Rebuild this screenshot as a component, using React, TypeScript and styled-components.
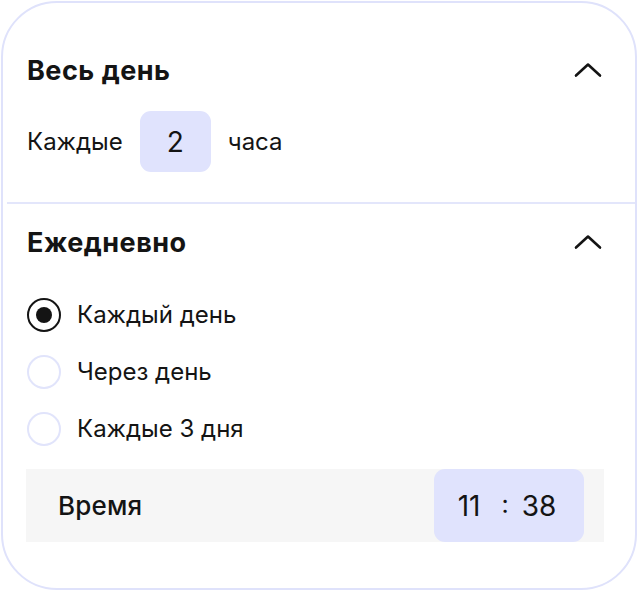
import React from "react";
import styled, { createGlobalStyle } from "styled-components";

const Global = createGlobalStyle`
  html, body { margin: 0; padding: 0; background: #ffffff; }
  body { font-family: Inter, "Noto Sans", sans-serif; color: #141414; }
`;

const Page = styled.div`
  width: 640px;
  height: 593px;
  padding: 1px 3px 3px 1px;
  box-sizing: border-box;
`;

const Card = styled.div`
  width: 636px;
  height: 589px;
  box-sizing: border-box;
  border: 2px solid #dfe2fb;
  border-radius: 56px;
  background: #ffffff;
  overflow: hidden;
  display: flex;
  flex-direction: column;
`;

const Section = styled.section<{ $top: number; $bottom: number }>`
  padding: ${(p) => p.$top}px 31px ${(p) => p.$bottom}px 24px;
  display: flex;
  flex-direction: column;
`;

const Header = styled.div`
  height: 40px;
  display: flex;
  align-items: center;
  justify-content: space-between;
`;

const Title = styled.h2`
  margin: 0;
  font-size: 27px;
  font-weight: 700;
  letter-spacing: 0.5px;
  color: #141414;
`;

const Chevron = styled.svg`
  width: 28px;
  height: 16px;
  margin-right: 2px;
`;

const EveryRow = styled.div`
  margin-top: 21px;
  display: flex;
  align-items: center;
  font-size: 24px;
`;

const NumberBox = styled.div`
  width: 71px;
  height: 61px;
  margin: 0 17px 0 17px;
  border-radius: 11px;
  background: #e0e3fd;
  display: flex;
  align-items: center;
  justify-content: center;
  font-size: 28px;
  color: #141414;
`;

const Divider = styled.hr`
  margin: 0 0 0 4px;
  border: none;
  height: 2px;
  background: #e3e6fb;
`;

const RadioList = styled.div`
  margin-top: 24px;
  display: flex;
  flex-direction: column;
`;

const RadioRow = styled.label`
  height: 57px;
  display: flex;
  align-items: center;
  gap: 16px;
  font-size: 24px;
  color: #141414;
  cursor: pointer;
`;

const RadioCircle = styled.span<{ $checked?: boolean }>`
  width: 34px;
  height: 34px;
  box-sizing: border-box;
  border-radius: 50%;
  border: 2px solid ${(p) => (p.$checked ? "#141414" : "#e1e4fb")};
  display: flex;
  align-items: center;
  justify-content: center;
  &::after {
    content: "";
    display: ${(p) => (p.$checked ? "block" : "none")};
    width: 16px;
    height: 16px;
    border-radius: 50%;
    background: #141414;
  }
`;

const TimeRow = styled.div`
  margin-top: 12px;
  margin-left: -1px;
  height: 73px;
  background: #f6f6f6;
  display: flex;
  align-items: center;
  justify-content: space-between;
  padding: 0 20px 0 32px;
`;

const TimeLabel = styled.span`
  font-size: 26px;
  font-weight: 500;
  letter-spacing: 0.2px;
  color: #141414;
`;

const TimeBox = styled.div`
  width: 150px;
  height: 73px;
  border-radius: 11px;
  background: #e0e3fd;
  display: flex;
  align-items: center;
  justify-content: center;
  font-size: 28px;
  color: #141414;
  padding-right: 4px;
  box-sizing: border-box;
`;

const Colon = styled.span`
  font-size: 25px;
  margin: 0 13px 0 21px;
  position: relative;
  top: -2px;
`;

const ChevronUp = () => (
  <Chevron viewBox="0 0 28 16" fill="none">
    <path d="M2 13.5 L14 2.5 L26 13.5" stroke="#141414" strokeWidth="2.6" strokeLinecap="round" strokeLinejoin="round" />
  </Chevron>
);

const options = [
  { label: "Каждый день", checked: true },
  { label: "Через день", checked: false },
  { label: "Каждые 3 дня", checked: false },
];

export default function App() {
  return (
    <>
      <Global />
      <Page>
        <Card>
          <Section $top={47} $bottom={30}>
            <Header>
              <Title>Весь день</Title>
              <ChevronUp />
            </Header>
            <EveryRow>
              <span>Каждые</span>
              <NumberBox>2</NumberBox>
              <span>часа</span>
            </EveryRow>
          </Section>
          <Divider />
          <Section $top={18} $bottom={0}>
            <Header>
              <Title>Ежедневно</Title>
              <ChevronUp />
            </Header>
            <RadioList>
              {options.map((o) => (
                <RadioRow key={o.label}>
                  <RadioCircle $checked={o.checked} />
                  <span>{o.label}</span>
                </RadioRow>
              ))}
            </RadioList>
            <TimeRow>
              <TimeLabel>Время</TimeLabel>
              <TimeBox>
                <span>11</span>
                <Colon>:</Colon>
                <span>38</span>
              </TimeBox>
            </TimeRow>
          </Section>
        </Card>
      </Page>
    </>
  );
}
